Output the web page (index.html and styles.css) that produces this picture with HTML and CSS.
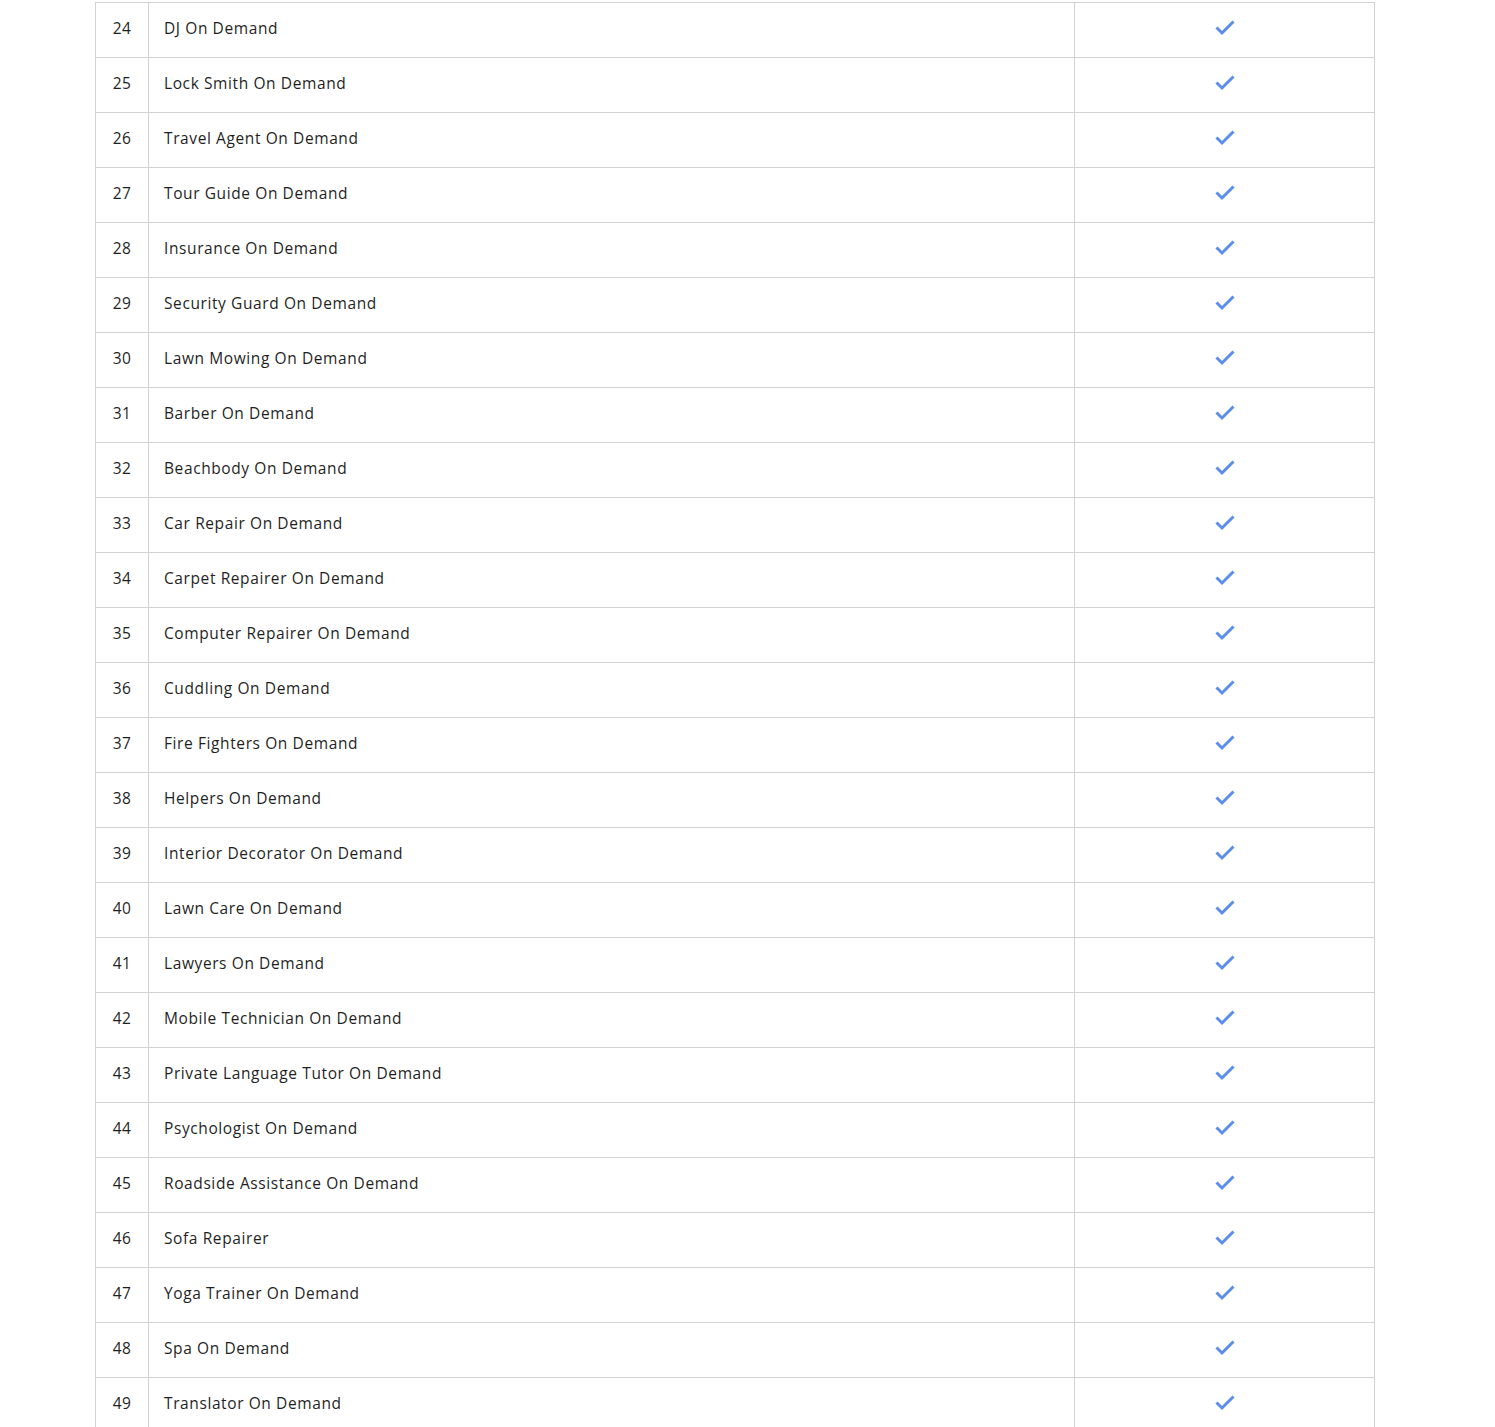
FILE: index.html
```html
<!DOCTYPE html>
<html>
<head>
<meta charset="utf-8">
<link rel="stylesheet" href="styles.css">
</head>
<body>
<table class="features">
<colgroup><col class="c-num"><col class="c-name"><col class="c-check"></colgroup>
<tbody>
<tr><td class="num">24</td><td class="name">DJ On Demand</td><td class="check"><svg class="tick" viewBox="0 0 22 16"><polyline points="2.5,7.5 8,13 19.5,1.5"/></svg></td></tr>
<tr><td class="num">25</td><td class="name">Lock Smith On Demand</td><td class="check"><svg class="tick" viewBox="0 0 22 16"><polyline points="2.5,7.5 8,13 19.5,1.5"/></svg></td></tr>
<tr><td class="num">26</td><td class="name">Travel Agent On Demand</td><td class="check"><svg class="tick" viewBox="0 0 22 16"><polyline points="2.5,7.5 8,13 19.5,1.5"/></svg></td></tr>
<tr><td class="num">27</td><td class="name">Tour Guide On Demand</td><td class="check"><svg class="tick" viewBox="0 0 22 16"><polyline points="2.5,7.5 8,13 19.5,1.5"/></svg></td></tr>
<tr><td class="num">28</td><td class="name">Insurance On Demand</td><td class="check"><svg class="tick" viewBox="0 0 22 16"><polyline points="2.5,7.5 8,13 19.5,1.5"/></svg></td></tr>
<tr><td class="num">29</td><td class="name">Security Guard On Demand</td><td class="check"><svg class="tick" viewBox="0 0 22 16"><polyline points="2.5,7.5 8,13 19.5,1.5"/></svg></td></tr>
<tr><td class="num">30</td><td class="name">Lawn Mowing On Demand</td><td class="check"><svg class="tick" viewBox="0 0 22 16"><polyline points="2.5,7.5 8,13 19.5,1.5"/></svg></td></tr>
<tr><td class="num">31</td><td class="name">Barber On Demand</td><td class="check"><svg class="tick" viewBox="0 0 22 16"><polyline points="2.5,7.5 8,13 19.5,1.5"/></svg></td></tr>
<tr><td class="num">32</td><td class="name">Beachbody On Demand</td><td class="check"><svg class="tick" viewBox="0 0 22 16"><polyline points="2.5,7.5 8,13 19.5,1.5"/></svg></td></tr>
<tr><td class="num">33</td><td class="name">Car Repair On Demand</td><td class="check"><svg class="tick" viewBox="0 0 22 16"><polyline points="2.5,7.5 8,13 19.5,1.5"/></svg></td></tr>
<tr><td class="num">34</td><td class="name">Carpet Repairer On Demand</td><td class="check"><svg class="tick" viewBox="0 0 22 16"><polyline points="2.5,7.5 8,13 19.5,1.5"/></svg></td></tr>
<tr><td class="num">35</td><td class="name">Computer Repairer On Demand</td><td class="check"><svg class="tick" viewBox="0 0 22 16"><polyline points="2.5,7.5 8,13 19.5,1.5"/></svg></td></tr>
<tr><td class="num">36</td><td class="name">Cuddling On Demand</td><td class="check"><svg class="tick" viewBox="0 0 22 16"><polyline points="2.5,7.5 8,13 19.5,1.5"/></svg></td></tr>
<tr><td class="num">37</td><td class="name">Fire Fighters On Demand</td><td class="check"><svg class="tick" viewBox="0 0 22 16"><polyline points="2.5,7.5 8,13 19.5,1.5"/></svg></td></tr>
<tr><td class="num">38</td><td class="name">Helpers On Demand</td><td class="check"><svg class="tick" viewBox="0 0 22 16"><polyline points="2.5,7.5 8,13 19.5,1.5"/></svg></td></tr>
<tr><td class="num">39</td><td class="name">Interior Decorator On Demand</td><td class="check"><svg class="tick" viewBox="0 0 22 16"><polyline points="2.5,7.5 8,13 19.5,1.5"/></svg></td></tr>
<tr><td class="num">40</td><td class="name">Lawn Care On Demand</td><td class="check"><svg class="tick" viewBox="0 0 22 16"><polyline points="2.5,7.5 8,13 19.5,1.5"/></svg></td></tr>
<tr><td class="num">41</td><td class="name">Lawyers On Demand</td><td class="check"><svg class="tick" viewBox="0 0 22 16"><polyline points="2.5,7.5 8,13 19.5,1.5"/></svg></td></tr>
<tr><td class="num">42</td><td class="name">Mobile Technician On Demand</td><td class="check"><svg class="tick" viewBox="0 0 22 16"><polyline points="2.5,7.5 8,13 19.5,1.5"/></svg></td></tr>
<tr><td class="num">43</td><td class="name">Private Language Tutor On Demand</td><td class="check"><svg class="tick" viewBox="0 0 22 16"><polyline points="2.5,7.5 8,13 19.5,1.5"/></svg></td></tr>
<tr><td class="num">44</td><td class="name">Psychologist On Demand</td><td class="check"><svg class="tick" viewBox="0 0 22 16"><polyline points="2.5,7.5 8,13 19.5,1.5"/></svg></td></tr>
<tr><td class="num">45</td><td class="name">Roadside Assistance On Demand</td><td class="check"><svg class="tick" viewBox="0 0 22 16"><polyline points="2.5,7.5 8,13 19.5,1.5"/></svg></td></tr>
<tr><td class="num">46</td><td class="name">Sofa Repairer</td><td class="check"><svg class="tick" viewBox="0 0 22 16"><polyline points="2.5,7.5 8,13 19.5,1.5"/></svg></td></tr>
<tr><td class="num">47</td><td class="name">Yoga Trainer On Demand</td><td class="check"><svg class="tick" viewBox="0 0 22 16"><polyline points="2.5,7.5 8,13 19.5,1.5"/></svg></td></tr>
<tr><td class="num">48</td><td class="name">Spa On Demand</td><td class="check"><svg class="tick" viewBox="0 0 22 16"><polyline points="2.5,7.5 8,13 19.5,1.5"/></svg></td></tr>
<tr><td class="num">49</td><td class="name">Translator On Demand</td><td class="check"><svg class="tick" viewBox="0 0 22 16"><polyline points="2.5,7.5 8,13 19.5,1.5"/></svg></td></tr>
</tbody>
</table>
</body>
</html>
```

FILE: styles.css
```css
html, body {
  margin: 0;
  padding: 0;
  background: #ffffff;
}
body {
  padding: 2px 0 0 95px;
  font-family: "Open Sans", "Liberation Sans", sans-serif;
  color: #1f1f1f;
}
.features {
  border-collapse: collapse;
  table-layout: fixed;
  width: 1279px;
}
.c-num { width: 53px; }
.c-name { width: 926px; }
.c-check { width: 300px; }
.features td {
  border: 1px solid #d2d2d2;
  height: 55px;
  box-sizing: border-box;
  padding: 0 0 5px 0;
  font-size: 15.5px;
  vertical-align: middle;
}
.num {
  text-align: center;
  letter-spacing: 0.4px;
}
.features td.name {
  padding-left: 15px;
  letter-spacing: 0.6px;
}
.check {
  text-align: center;
  line-height: 0;
}
.tick {
  width: 22px;
  height: 16px;
  fill: none;
  stroke: #5b8ded;
  stroke-width: 3;
  stroke-linejoin: miter;
  stroke-linecap: butt;
}
```
